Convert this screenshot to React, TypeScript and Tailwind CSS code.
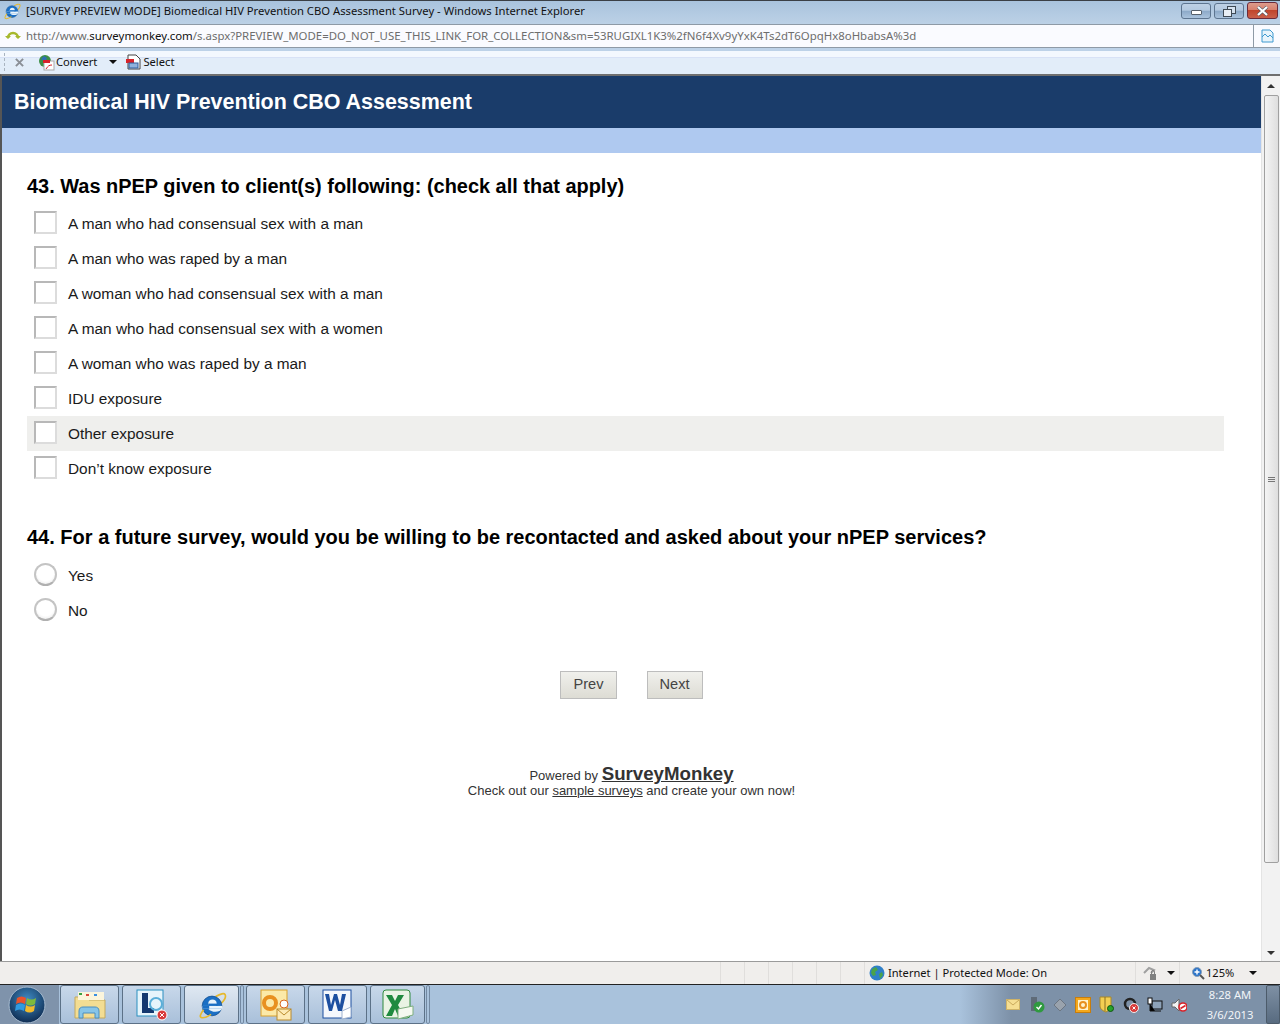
const checkboxOptions = [
  "A man who had consensual sex with a man",
  "A man who was raped by a man",
  "A woman who had consensual sex with a man",
  "A man who had consensual sex with a women",
  "A woman who was raped by a man",
  "IDU exposure",
  "Other exposure",
  "Don’t know exposure",
];

function IeIcon({ size = 16 }: { size?: number }) {
  return (
    <svg width={size} height={size} viewBox="0 0 32 32" className="shrink-0">
      <path d="M20 7c5-3 9-4 10-2 1 2-1 6-4 9" fill="none" stroke="#e6b92e" strokeWidth="1.800" />
      <circle cx="16" cy="17" r="10.500" fill="#1b6fc4" stroke="#0d4a8c" strokeWidth="0.800" />
      <circle cx="16.500" cy="14.500" r="4.500" fill="#e8f3fb" />
      <rect x="6" y="17" width="21" height="3" fill="#e8f3fb" />
      <path d="M12 20h15c-1 1-2 2-3 2.500-4 1.500-9 1-12-2.500z" fill="#e8f3fb" />
      <rect x="12" y="14.500" width="10" height="2.500" fill="#1b6fc4" />
      <rect x="6" y="17" width="7" height="3" fill="#1b6fc4" />
      <path d="M7 21C4 25 2 29 5 29.500c3 .5 7-1.500 10-3.500" fill="none" stroke="#e6b92e" strokeWidth="1.800" />
    </svg>
  );
}

function WindowButton({ kind }: { kind: "min" | "restore" | "close" }) {
  if (kind === "close") {
    return (
      <div className="-mt-[1px] flex h-[17px] w-[31px] items-center justify-center rounded-[3px] border border-[#6b2b3a] bg-[linear-gradient(#dd9c8c_0%,#d8806c_45%,#c0452c_50%,#c9604a_100%)]">
        <svg width="13" height="10" viewBox="0 0 13 10">
          <path d="M2 1l9 8M11 1l-9 8" stroke="#4b5a66" strokeWidth="3.200" />
          <path d="M2 1l9 8M11 1l-9 8" stroke="#ffffff" strokeWidth="2.200" />
        </svg>
      </div>
    );
  }
  return (
    <div className="flex h-[16px] w-[30px] items-center justify-center rounded-[3px] border border-[#5d7590] bg-[linear-gradient(#bed1e5_0%,#b3c9e0_45%,#8ca9c8_50%,#aac3dd_100%)]">
      {kind === "min" ? (
        <div className="mt-[2px] h-[5px] w-[11px] rounded-[1px] border border-[#56606c] bg-white" />
      ) : (
        <svg width="13" height="11" viewBox="0 0 13 11">
          <rect x="4.500" y="0.500" width="8" height="7" fill="#d6e2ef" stroke="#3f4a55" />
          <rect x="0.500" y="3.500" width="8" height="7" fill="#e8eef5" stroke="#3f4a55" />
        </svg>
      )}
    </div>
  );
}

function TitleBar() {
  return (
    <div className="flex h-[24px] shrink-0 items-start border-t-[1px] border-[#3a3f45] bg-[linear-gradient(#a9c3dd,#bcd1e6)] pl-[3px] pt-[1px]">
      <IeIcon size={18} />
      <span className="ml-[5px] whitespace-nowrap text-[11.25px] leading-[18px] text-[#111]">
        [SURVEY PREVIEW MODE] Biomedical HIV Prevention CBO Assessment Survey - Windows Internet Explorer
      </span>
      <div className="ml-auto mr-[2px] flex items-start gap-[3px] pt-[1px]">
        <WindowButton kind="min" />
        <WindowButton kind="restore" />
        <WindowButton kind="close" />
      </div>
    </div>
  );
}

function AddressBar() {
  return (
    <div className="flex h-[24px] shrink-0 items-center border-y border-[#8e9aa6] bg-[#fafbff] pl-[1px]">
      <svg width="20" height="16" viewBox="0 0 20 16" className="-mt-[3px] shrink-0">
        <path d="M7 11a5 5 0 0 1 10 0" fill="none" stroke="#a6b82e" strokeWidth="2.400" />
        <path d="M4 9h6l-3 3zM14 9h6l-3 3z" fill="#a6b82e" />
      </svg>
      <span className="ml-[5px] whitespace-nowrap text-[11.42px] text-[#6d6d6d]">
        http://www.<span className="text-[#111]">surveymonkey.com</span>
        /s.aspx?PREVIEW_MODE=DO_NOT_USE_THIS_LINK_FOR_COLLECTION&amp;sm=53RUGIXL1K3%2fN6f4Xv9yYxK4Ts2dT6OpqHx8oHbabsA%3d
      </span>
      <div className="ml-auto flex h-full w-[27px] items-center justify-center border-l border-[#8e9aa6]">
        <svg width="13" height="14" viewBox="0 0 13 14">
          <path d="M1 1h8l3 3v9H1z" fill="#e8f4fb" stroke="#3f9ad0" />
          <path d="M1 8l3-3 3 3 2-2 3 3" fill="none" stroke="#3f9ad0" />
        </svg>
      </div>
    </div>
  );
}

function ToolBar() {
  return (
    <div className="flex h-[26px] shrink-0 items-center bg-[linear-gradient(#bdd2e8_0,#bdd2e8_3px,#f3f8fe_3px,#f3f8fe_9px,#d8e2f6_9px,#d8e2f6_10px,#e2edf9_10px)] pl-[4px] pt-[2px] text-[11.2px] text-[#111]">
      <div className="h-[18px] w-[2px] border-l border-dashed border-[#a9b4c0]" />
      <svg width="9" height="9" viewBox="0 0 10 10" className="ml-[9px] shrink-0">
        <path d="M1 1l8 8M9 1l-8 8" stroke="#8a8f96" strokeWidth="2.200" />
      </svg>
      <svg width="17" height="17" viewBox="0 0 17 17" className="ml-[14px] shrink-0">
        <circle cx="7" cy="7" r="6" fill="#3d8f46" />
        <path d="M3 5l3-3 3 2-2 4zM9 9l3-1 0 4-2 1z" fill="#2f6fb5" />
        <rect x="6" y="7" width="10" height="9" fill="#ffffff" stroke="#a9a9a9" />
        <rect x="5" y="6" width="7" height="3" fill="#d8232a" />
        <path d="M8 15c2-3 3-4 6-4" fill="none" stroke="#d8232a" />
      </svg>
      <span className="ml-[1px]">Convert</span>
      <div className="ml-[12px] h-0 w-0 border-x-[4px] border-t-[4px] border-x-transparent border-t-[#111]" />
      <svg width="17" height="17" viewBox="0 0 17 17" className="ml-[8px] shrink-0">
        <path d="M3 1h8l4 4v10H3z" fill="#fff" stroke="#444" />
        <rect x="1" y="5" width="8" height="4" fill="#d8232a" />
        <rect x="4" y="9" width="9" height="5" fill="#8fb2dd" stroke="#2f5f9e" />
      </svg>
      <span className="ml-[1px]">Select</span>
    </div>
  );
}

function CheckBox() {
  return (
    <div className="h-[23px] w-[23px] shrink-0 border-2 border-[#dcdcdc] border-t-[#b8b8b8] border-l-[#b8b8b8] bg-white" />
  );
}

function RadioButton() {
  return (
    <div className="-mt-[1px] h-[23px] w-[23px] shrink-0 rounded-full border-2 border-[#c4c4c4] border-b-[#b0b0b0] bg-[radial-gradient(circle_at_50%_40%,#ffffff_55%,#e2e2e2_100%)]" />
  );
}

function QuestionOption({ label, radio, hover }: { label: string; radio?: boolean; hover?: boolean }) {
  return (
    <div className={`flex h-[35px] items-center pl-[7px] ${hover ? "bg-[#efefed]" : ""}`}>
      <div className="-mt-[2px]">{radio ? <RadioButton /> : <CheckBox />}</div>
      <span className="ml-[11px] text-[15.4px] leading-[18px] text-[#1a1a1a]">{label}</span>
    </div>
  );
}

function NavButton({ label }: { label: string }) {
  return (
    <div className="flex h-[28px] items-center justify-center border border-[#bdbdbd] bg-[linear-gradient(#f0f0ec,#dddcd4)] px-[12px] text-[14.6px] text-[#444]">
      {label}
    </div>
  );
}

function Scrollbar() {
  return (
    <div className="flex w-[19px] shrink-0 flex-col items-center border-l border-[#e4e4e4] bg-[#f2f2f2]">
      <div className="flex h-[19px] items-center justify-center">
        <div className="h-0 w-0 border-x-[4px] border-b-[4px] border-x-transparent border-b-[#333]" />
      </div>
      <div className="flex h-[768px] w-[15px] items-center justify-center rounded-[2px] border border-[#a0a0a0] bg-[linear-gradient(90deg,#f4f4f4,#dedede)]">
        <div className="flex flex-col gap-[1px]">
          <div className="h-[1px] w-[7px] bg-[#777]" />
          <div className="h-[1px] w-[7px] bg-[#777]" />
          <div className="h-[1px] w-[7px] bg-[#777]" />
        </div>
      </div>
      <div className="mt-auto flex h-[17px] items-center justify-center">
        <div className="h-0 w-0 border-x-[4px] border-t-[4px] border-x-transparent border-t-[#333]" />
      </div>
    </div>
  );
}

function SurveyPage() {
  return (
    <div className="flex min-h-0 flex-1 border-l-2 border-t-2 border-l-[#555] border-t-[#6f6f6f]">
      <div className="min-w-0 flex-1 bg-white font-['Liberation_Sans',Arial,sans-serif]">
        <div className="flex h-[52px] items-center bg-[#1a3c6a] pl-[12px] pt-[1px] text-[21.45px] font-bold text-white">
          Biomedical HIV Prevention CBO Assessment
        </div>
        <div className="h-[25px] bg-[#afc9f0]" />
        <div className="pl-[25px] pr-[37px]">
          <h2 className="mt-[21px] h-[32px] text-[19.95px] leading-[24px] font-bold text-black">
            43. Was nPEP given to client(s) following: (check all that apply)
          </h2>
          {checkboxOptions.map((label) => (
            <QuestionOption key={label} label={label} hover={label === "Other exposure"} />
          ))}
          <h2 className="mt-[39px] h-[33px] text-[20px] leading-[24px] font-bold text-black">
            44. For a future survey, would you be willing to be recontacted and asked about your nPEP services?
          </h2>
          {["Yes", "No"].map((label) => (
            <QuestionOption key={label} label={label} radio />
          ))}
        </div>
        <div className="mt-[43px] flex justify-center gap-[30px]">
          <NavButton label="Prev" />
          <NavButton label="Next" />
        </div>
        <div className="mt-[66px] text-center text-[13px] leading-[18px] text-[#333]">
          <p className="h-[17px]">
            Powered by{" "}
            <span className="text-[18.7px] font-bold underline">SurveyMonkey</span>
          </p>
          <p>
            Check out our <span className="underline">sample surveys</span> and create your own now!
          </p>
        </div>
      </div>
      <Scrollbar />
    </div>
  );
}

function StatusBar() {
  return (
    <div className="flex h-[23px] shrink-0 items-center border-t border-[#9a9a9a] bg-[#f0eeec] text-[11.1px] text-[#111]">
      <div className="flex h-full flex-1 justify-end">
        {[0, 1, 2, 3, 4, 5].map((i) => (
          <div key={i} className="h-full w-[24px] border-l border-[#e0dedc]" />
        ))}
      </div>
      <div className="flex h-full w-[271px] items-center border-l border-[#e0dedc] pl-[4px]">
        <svg width="16" height="16" viewBox="0 0 16 16" className="shrink-0">
          <circle cx="8" cy="8" r="7.500" fill="#2f7fc8" />
          <path d="M3 4l4-2 2 3-3 2 1 3-3 1-2-3zM10 9l3-2 1 3-3 4z" fill="#4aa34a" />
        </svg>
        <span className="ml-[3px] whitespace-nowrap">Internet | Protected Mode: On</span>
      </div>
      <div className="flex h-full w-[44px] items-center border-l border-[#e0dedc] pl-[7px]">
        <svg width="15" height="15" viewBox="0 0 15 15">
          <path d="M1 7l5-5 5 2-3 3" fill="none" stroke="#a0a0a0" strokeWidth="2" />
          <rect x="7" y="8" width="6" height="6" fill="#808080" />
          <path d="M8.500 8V6a1.500 1.500 0 0 1 3 0v2" fill="none" stroke="#808080" />
        </svg>
        <div className="ml-[9px] h-0 w-0 border-x-[4px] border-t-[4px] border-x-transparent border-t-[#111]" />
      </div>
      <div className="flex h-full w-[101px] items-center border-l border-[#e0dedc] pl-[11px]">
        <svg width="14" height="14" viewBox="0 0 14 14" className="shrink-0">
          <circle cx="6" cy="6" r="4.500" fill="#2c74c9" stroke="#8aa0b8" />
          <path d="M3.500 6h5M6 3.500v5" stroke="#fff" strokeWidth="1.400" />
          <path d="M9 9l4 4" stroke="#555" strokeWidth="2" />
        </svg>
        <span className="ml-[1px]">125%</span>
        <div className="ml-[15px] h-0 w-0 border-x-[4px] border-t-[4px] border-x-transparent border-t-[#111]" />
      </div>
    </div>
  );
}

function TaskButton({ children, narrow, active }: { children: React.ReactNode; narrow?: boolean; active?: boolean }) {
  return (
    <div
      className={`flex h-[39px] items-center justify-center rounded-[3px] border border-[#5c7187] ${
        narrow ? "w-[55px]" : "w-[59px]"
      } ${active ? "bg-[linear-gradient(#dfe8f2,#bccde0)]" : "bg-[linear-gradient(#c8d8ea,#a9c0da)]"}`}
    >
      {children}
    </div>
  );
}

function Taskbar() {
  return (
    <div className="flex h-[40px] shrink-0 items-end border-t border-[#222] bg-[linear-gradient(90deg,#a9c2dc_0%,#a9c2dc_75%,#7d91a8_79%,#7d91a8_100%)]">
      <div className="flex h-[39px] w-[59px] items-center bg-[#7f93ab] pl-[8px]">
        <svg width="38" height="38" viewBox="0 0 38 38">
          <defs>
            <radialGradient id="orb" cx="50%" cy="35%" r="65%">
              <stop offset="0%" stopColor="#3f8cc4" />
              <stop offset="100%" stopColor="#0f2c52" />
            </radialGradient>
          </defs>
          <circle cx="19" cy="19" r="18" fill="url(#orb)" stroke="#a8bcd0" />
          <path d="M9 12c3-2 6-2 9 0l-1 6c-3-2-6-2-9 0z" fill="#e8532c" />
          <path d="M19 12c3 2 6 2 9 0l-1 6c-3 2-6 2-9 0z" fill="#7fba3c" />
          <path d="M8 19c3-2 6-2 9 0l-1 6c-3-2-6-2-9 0z" fill="#2f9be0" />
          <path d="M18 19c3 2 6 2 9 0l-1 6c-3 2-6 2-9 0z" fill="#f2bb2c" />
        </svg>
      </div>
      <div className="flex h-[39px] pl-[1px]">
        <div className="flex gap-[3px]">
          <TaskButton>
            <svg width="32" height="30" viewBox="0 0 32 30">
              <path d="M1 7h11l3 3h16v18H1z" fill="#f3dd93" stroke="#c4a95e" />
              <rect x="4" y="2" width="26" height="8" fill="#fbf5dc" />
              <path d="M5 4h3" stroke="#3aa040" strokeWidth="2" />
              <path d="M12 5h3" stroke="#d9483a" strokeWidth="2" />
              <path d="M20 5h3" stroke="#3a8fe0" strokeWidth="2" />
              <path d="M5 28v-7c0-3 2-4 4-4h12c2 0 4 1 4 4v7h-4v-5H9v5z" fill="#87c5e8" stroke="#4a8ec0" />
            </svg>
          </TaskButton>
          <TaskButton>
            <svg width="32" height="32" viewBox="0 0 32 32">
              <rect x="1" y="1" width="26" height="26" fill="#e6f4fb" stroke="#2a8fc0" />
              <path d="M6 4h6v15h6v5H6z" fill="#14386f" />
              <circle cx="20" cy="15" r="6" fill="none" stroke="#5aaed8" strokeWidth="2" />
              <circle cx="26" cy="26" r="5" fill="#d93a3a" stroke="#fff" />
              <path d="M24 24l4 4M28 24l-4 4" stroke="#fff" />
            </svg>
          </TaskButton>
          <TaskButton narrow active>
            <IeIcon size={30} />
          </TaskButton>
        </div>
        <div className="ml-[1px] h-full w-[4px] rounded-[2px] border border-[#7389a2]" />
        <div className="ml-[2px] flex gap-[3px]">
          <TaskButton>
            <svg width="32" height="32" viewBox="0 0 32 32">
              <rect x="1" y="1" width="26" height="26" fill="#fbe9a8" stroke="#d9a02a" />
              <circle cx="10" cy="14" r="6" fill="none" stroke="#e8901f" strokeWidth="4" />
              <circle cx="24" cy="15" r="4" fill="#fff" stroke="#d9651f" />
              <rect x="17" y="20" width="14" height="11" fill="#fdeab5" stroke="#b98a2c" />
              <path d="M17 20l7 6 7-6" fill="none" stroke="#b98a2c" />
            </svg>
          </TaskButton>
          <TaskButton>
            <svg width="32" height="32" viewBox="0 0 32 32">
              <rect x="1" y="1" width="28" height="28" fill="#f4f7fc" stroke="#1d4fa0" />
              <path d="M3 5l4 0 2 11 3-11h3l3 11 2-11 4 0-4 17h-4l-3-11-3 11H7z" fill="#1d4fa0" />
              <path d="M20 22l9-4v10l-9 2z" fill="#ffffff" stroke="#9fb3d0" />
            </svg>
          </TaskButton>
          <TaskButton narrow>
            <svg width="32" height="32" viewBox="0 0 32 32">
              <rect x="1" y="1" width="27" height="28" rx="3" fill="#e9f3e4" stroke="#2f8a3f" />
              <path d="M4 6h6l3 6 3-6h6l-6 10 6 11h-6l-3-7-3 7H4l6-11z" fill="#1f8a3f" />
              <path d="M16 20l15-3v9l-15 4z" fill="#f5f9f1" stroke="#7fae7f" />
            </svg>
          </TaskButton>
        </div>
        <div className="ml-[1px] h-full w-[4px] rounded-[2px] border border-[#7389a2]" />
      </div>
      <div className="ml-auto flex h-[39px] items-center">
        <div className="flex items-center gap-[8px]">
          <svg width="14" height="11" viewBox="0 0 14 11">
            <rect x="0.500" y="0.500" width="13" height="10" fill="#f6de92" stroke="#cfb368" />
            <path d="M1 1l6 5 6-5" fill="none" stroke="#c9a95c" />
          </svg>
          <svg width="17" height="17" viewBox="0 0 17 17">
            <rect x="3" y="1" width="6" height="14" fill="#5f6b78" />
            <circle cx="11" cy="11" r="5.500" fill="#2f9a3f" />
            <path d="M8.500 11l2 2 3-4" fill="none" stroke="#fff" strokeWidth="1.400" />
          </svg>
          <svg width="14" height="14" viewBox="0 0 14 14">
            <path d="M7 1l6 6-6 6-6-6z" fill="#9aa3ad" stroke="#6c7682" />
          </svg>
          <svg width="16" height="16" viewBox="0 0 16 16">
            <rect x="0.500" y="0.500" width="15" height="15" fill="#f4a81c" stroke="#c87d0c" />
            <rect x="3" y="3" width="10" height="10" fill="#fff3cc" />
            <circle cx="8" cy="8" r="3" fill="none" stroke="#e8901f" strokeWidth="2" />
          </svg>
          <svg width="16" height="17" viewBox="0 0 16 17">
            <path d="M1 1h11v9c0 3-3 5-5 6-3-1-6-3-6-6z" fill="#f3cf52" stroke="#a9882b" />
            <path d="M6 1v14" stroke="#8a6f20" />
            <circle cx="11.500" cy="12.500" r="3" fill="#27a32b" stroke="#10560f" />
          </svg>
          <svg width="16" height="16" viewBox="0 0 16 16">
            <circle cx="7" cy="7" r="5" fill="none" stroke="#222" strokeWidth="2.500" />
            <circle cx="11" cy="11" r="4.500" fill="#d83a3a" stroke="#eee" />
            <path d="M9.500 9.500l3 3M12.500 9.500l-3 3" stroke="#fff" />
          </svg>
          <svg width="16" height="16" viewBox="0 0 16 16">
            <rect x="5" y="4" width="10" height="8" fill="#8da2b8" stroke="#111" />
            <rect x="1" y="1" width="4" height="6" fill="#fff" stroke="#111" />
            <path d="M8 14h6M3 7v7h5" stroke="#111" />
          </svg>
          <svg width="16" height="16" viewBox="0 0 16 16">
            <path d="M1 6h3l4-4v12l-4-4H1z" fill="#f2f2f2" stroke="#666" />
            <circle cx="12" cy="10" r="4" fill="#fff" stroke="#d8232a" strokeWidth="1.600" />
            <path d="M9.500 11.500l5-3" stroke="#d8232a" strokeWidth="1.600" />
          </svg>
        </div>
        <div className="ml-[13px] w-[60px] text-center text-[11.2px] leading-[20px] text-[#f2f5f8]">
          <p>8:28 AM</p>
          <p>3/6/2013</p>
        </div>
        <div className="ml-[6px] h-[39px] w-[14px] rounded-[2px] border border-[#4c5b6a] bg-[linear-gradient(#7e90a4,#586b80)]" />
      </div>
    </div>
  );
}

export default function App() {
  return (
    <div className="flex h-[1024px] w-[1280px] flex-col overflow-hidden bg-white font-['Noto_Sans',sans-serif]">
      <TitleBar />
      <AddressBar />
      <ToolBar />
      <SurveyPage />
      <StatusBar />
      <Taskbar />
    </div>
  );
}
